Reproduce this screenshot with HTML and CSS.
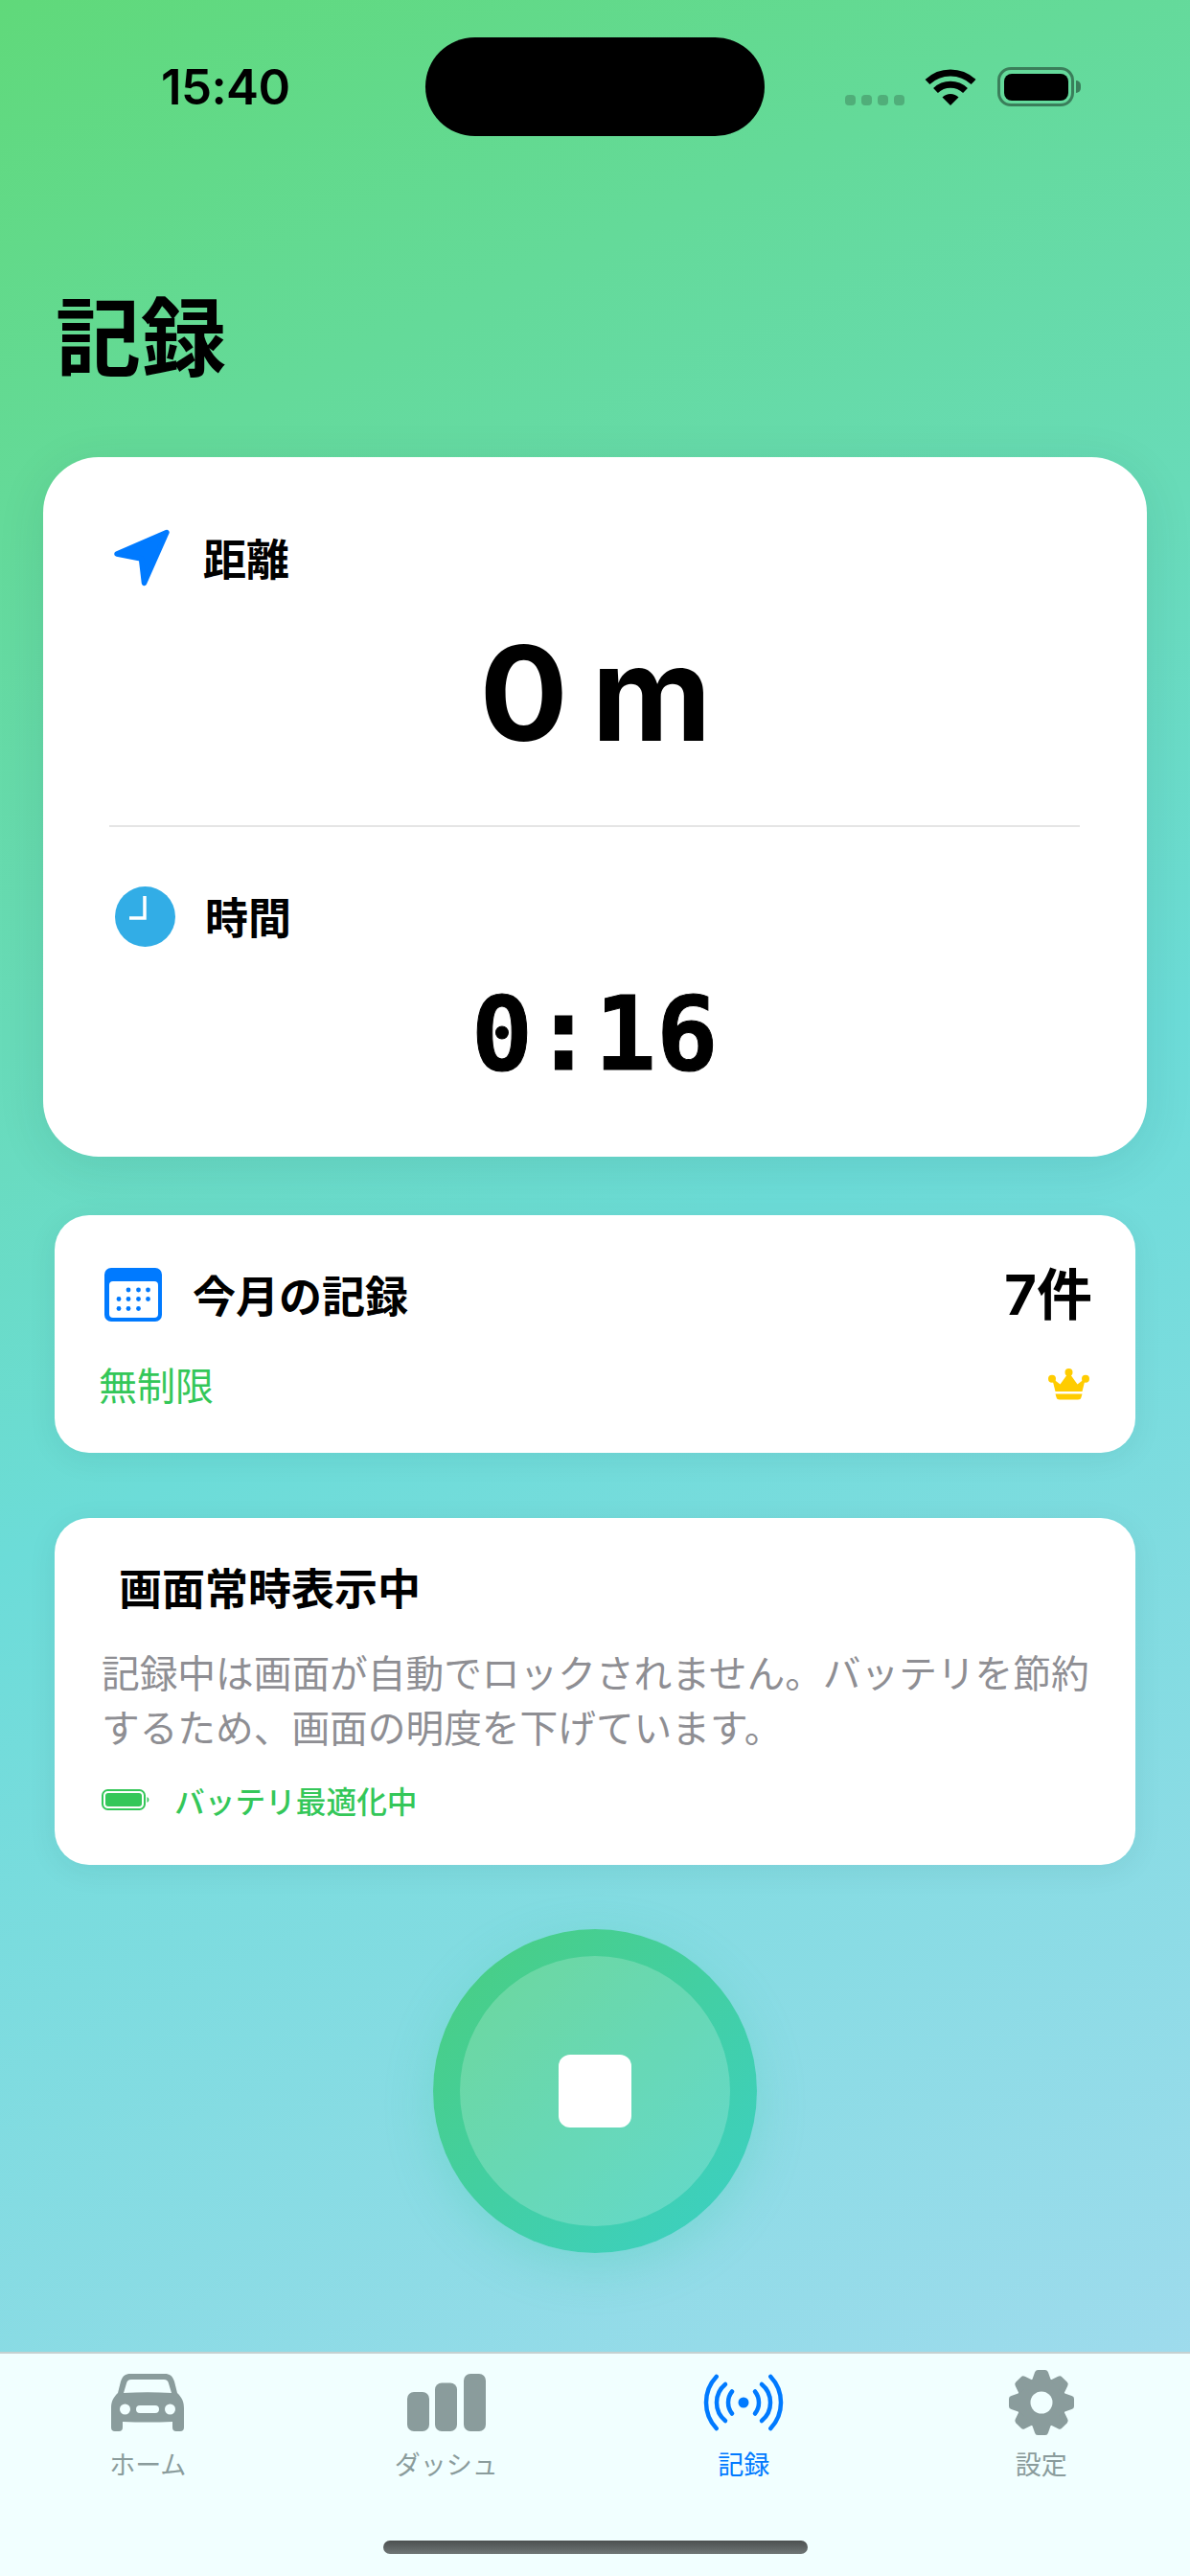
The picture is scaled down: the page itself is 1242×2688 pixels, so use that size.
FILE: index.html
```html
<!DOCTYPE html>
<html lang="ja">
<head>
<meta charset="utf-8">
<title>記録</title>
<link rel="stylesheet" href="styles.css">
</head>
<body>
<div class="screen">
  <div class="status">
    <div class="status-left"><span class="time">15:40</span></div>
    <div class="island"></div>
    <div class="status-right">
      <div class="dots"><i></i><i></i><i></i><i></i></div>
      <svg class="wifi" viewBox="0 0 54 39"><path d="M27 39L18.5 30.5A12 12 0 0 1 35.5 30.5Z" fill="#000"/><path d="M11.5 23.5A22.5 22.5 0 0 1 42.5 23.5" fill="none" stroke="#000" stroke-width="7"/><path d="M3 14.5A35 35 0 0 1 51 14.5" fill="none" stroke="#000" stroke-width="7"/></svg>
      <div class="battery"><div class="battery-fill"></div></div>
      <div class="battery-tip"></div>
    </div>
  </div>

  <main class="main">
    <h1 class="title">記録</h1>

    <section class="card-big">
      <div class="metric-head">
        <svg class="nav-icon" viewBox="0 0 60 60"><path d="M3 26L55 3.5L31.5 56.5L28.5 31Z" fill="#007AFF" stroke="#007AFF" stroke-width="5.5" stroke-linejoin="round"/></svg>
        <span class="metric-label">距離</span>
      </div>
      <div class="distance">0 m</div>
      <div class="divider"></div>
      <div class="metric-head metric-head-time">
        <svg class="clock-icon" viewBox="0 0 63 63"><circle cx="31.5" cy="31.5" r="31.5" fill="#32ADE6"/><path d="M31 10V33H15" fill="none" stroke="#fff" stroke-width="3.5"/></svg>
        <span class="metric-label">時間</span>
      </div>
      <div class="duration">0:16</div>
    </section>

    <section class="card card-month">
      <div class="month-row">
        <svg class="cal-icon" viewBox="0 0 60 56"><rect width="60" height="56" rx="7" fill="#007AFF"/><rect x="5" y="14" width="51" height="38" rx="4" fill="#fff"/><g fill="#007AFF"><circle cx="25" cy="23" r="2.4"/><circle cx="35.5" cy="23" r="2.4"/><circle cx="45.5" cy="23" r="2.4"/><circle cx="15" cy="32.5" r="2.4"/><circle cx="25" cy="32.5" r="2.4"/><circle cx="35.5" cy="32.5" r="2.4"/><circle cx="45.5" cy="32.5" r="2.4"/><circle cx="15" cy="42.5" r="2.4"/><circle cx="25" cy="42.5" r="2.4"/><circle cx="35.5" cy="42.5" r="2.4"/></g></svg>
        <span class="month-title">今月の記録</span>
        <span class="month-count">7件</span>
      </div>
      <div class="plan-row">
        <span class="plan">無制限</span>
        <svg class="crown" viewBox="0 0 43 33"><g fill="#FFCC00"><circle cx="4" cy="10.7" r="4"/><circle cx="21.5" cy="4" r="4"/><circle cx="39" cy="10.7" r="4"/><path d="M4 10L12.5 16.5L21.5 4L30.5 16.5L39 10L35.5 24H7.5Z"/><path d="M7.5 26.500H35.500L34.500 30Q34 32.500 31 32.500H12Q9 32.500 8.500 30Z"/></g></svg>
      </div>
    </section>

    <section class="card card-screen">
      <h2 class="screen-title">画面常時表示中</h2>
      <p class="screen-text">記録中は画面が自動でロックされません。バッテリを節約するため、画面の明度を下げています。</p>
      <div class="opt-row">
        <svg class="mini-battery" viewBox="0 0 50 22"><rect x="1" y="1" width="44" height="20" rx="5.500" fill="none" stroke="#34C759" stroke-width="2"/><rect x="4" y="4" width="38" height="14" rx="3" fill="#34C759"/><path d="M47.500 8Q49.500 9 49.500 11Q49.500 13 47.500 14Z" fill="#34C759"/></svg>
        <span class="opt-text">バッテリ最適化中</span>
      </div>
    </section>

    <div class="stop-wrap">
      <button class="stop" type="button"><span class="stop-inner"><span class="stop-square"></span></span></button>
    </div>
  </main>

  <nav class="tabbar">
    <div class="tabs">
      <div class="tab">
        <svg class="tab-icon car" viewBox="0 0 76 60"><path fill="#8A9C9C" fill-rule="evenodd" d="M20 0H56C61 0 64 2 66 8L69 20C74 25 76 29 76 36V56Q76 60 72 60H68Q64 60 64 56V50Q38 51 12 50V56Q12 60 8 60H4Q0 60 0 56V36C0 29 2 25 7 20L10 8C12 2 15 0 20 0ZM21 6C18 6 17 7 16 10L13 20Q38 18.500 63 20L60 10C59 7 58 6 55 6ZM9 37A5.500 5.500 0 1 0 20 37A5.500 5.500 0 1 0 9 37ZM56 37A5.500 5.500 0 1 0 67 37A5.500 5.500 0 1 0 56 37ZM30 33Q26 33 26 37Q26 41 30 41H46Q50 41 50 37Q50 33 46 33Z"/></svg>
        <span class="tab-label">ホーム</span>
      </div>
      <div class="tab">
        <svg class="tab-icon bars" viewBox="0 0 82 60"><g fill="#8A9C9C"><rect x="0" y="19" width="23" height="41" rx="7"/><rect x="29" y="9.500" width="23" height="50.500" rx="7"/><rect x="59" y="0" width="23" height="60" rx="7"/></g></svg>
        <span class="tab-label">ダッシュ</span>
      </div>
      <div class="tab tab-active">
        <svg class="tab-icon signal" viewBox="-42 -30 84 60"><circle r="5.500" fill="#007AFF"/><g fill="none" stroke="#007AFF" stroke-width="4.500" stroke-linecap="round"><path d="M-12 -11.500A18.500 18.500 0 0 0 -12 11.500"/><path d="M-19 -19A24.500 24.500 0 0 0 -19 19"/><path d="M-28.300 -27A39.400 39.400 0 0 0 -28.300 27"/><path d="M12 -11.500A18.500 18.500 0 0 1 12 11.500"/><path d="M19 -19A24.500 24.500 0 0 1 19 19"/><path d="M28.300 -27A39.400 39.400 0 0 1 28.300 27"/></g></svg>
        <span class="tab-label">記録</span>
      </div>
      <div class="tab">
        <svg class="tab-icon gear" viewBox="-34 -34 68 68"><defs><path id="tooth" d="M-10 -23L-7 -31.500Q-6.300 -34 -4 -34H4Q6.300 -34 7 -31.500L10 -23Z"/></defs><g fill="#8A9C9C"><circle r="26"/><use href="#tooth"/><use href="#tooth" transform="rotate(45)"/><use href="#tooth" transform="rotate(90)"/><use href="#tooth" transform="rotate(135)"/><use href="#tooth" transform="rotate(180)"/><use href="#tooth" transform="rotate(225)"/><use href="#tooth" transform="rotate(270)"/><use href="#tooth" transform="rotate(315)"/></g><circle r="11.500" fill="#F1FFFF"/></svg>
        <span class="tab-label">設定</span>
      </div>
    </div>
    <div class="home-indicator"></div>
  </nav>
</div>
</body>
</html>
```
FILE: styles.css
```css
* { box-sizing: border-box; }
html, body { margin: 0; padding: 0; }
body { font-family: "Noto Sans CJK JP", "Noto Sans", sans-serif; color: #000; }
.screen {
  width: 1242px;
  height: 2688px;
  display: flex;
  flex-direction: column;
  overflow: hidden;
  background: linear-gradient(155.2deg, #60d97a 0%, #6cdcd8 50%, #a6dbf0 100%);
}

/* status bar */
.status { display: flex; padding-top: 39px; height: 142px; flex: none; }
.status-left { width: 444px; padding-left: 168px; display: flex; align-items: center; }
.time { font-family: Inter, "Liberation Sans", sans-serif; font-weight: 600; font-size: 51px; line-height: 60px; letter-spacing: -0.6px; }
.island { width: 354px; height: 103px; border-radius: 52px; background: #000; }
.status-right { display: flex; position: relative; margin-left: 84px; height: 72px; margin-top: 31px; align-items: flex-start; }
.dots { display: flex; gap: 6px; margin-top: 29px; }
.dots i { display: block; width: 11px; height: 11px; border-radius: 4px; background: rgba(0, 0, 0, 0.2); }
.wifi { width: 54px; height: 39px; margin-left: 21px; margin-top: 1px; }
.battery { width: 80px; height: 41px; margin-left: 22px; border: 3.5px solid rgba(0, 0, 0, 0.42); border-radius: 14px; padding: 3.5px; }
.battery-fill { width: 100%; height: 100%; background: #000; border-radius: 8px; }
.battery-tip { width: 5px; height: 13px; margin: 14px 0 0 2px; background: rgba(0, 0, 0, 0.42); border-radius: 0 5px 5px 0; }

/* main */
.main { flex: 1; display: flex; flex-direction: column; }
.title { margin: 160px 0 0 58px; font-size: 89px; line-height: 89px; font-weight: 700; }

.card-big {
  margin: 86px 45px 0;
  height: 730px;
  padding: 75px 70px 0 69px;
  background: #fff;
  border-radius: 58px;
  box-shadow: 0 10px 50px rgba(0, 60, 60, 0.10);
}
.metric-head { display: flex; align-items: center; height: 60px; }
.nav-icon { width: 60px; height: 60px; margin-left: 5px; }
.metric-label { font-size: 45px; line-height: 60px; font-weight: 700; margin-left: 33px; }
.distance { font-family: Inter, Roboto, sans-serif; font-weight: 700; font-size: 137px; line-height: 150px; text-align: center; margin-top: 36px; letter-spacing: -2px; word-spacing: -4px; }
.divider { height: 2px; background: #e5e5e5; margin-top: 63px; }
.metric-head-time { margin-top: 61px; height: 64px; }
.clock-icon { width: 63px; height: 63px; margin-left: 6px; }
.metric-head-time .metric-label { margin-left: 31px; }
.duration { font-family: "DejaVu Sans Mono", "Liberation Mono", monospace; font-weight: 700; font-size: 107px; line-height: 120px; text-align: center; margin-top: 31px; -webkit-text-stroke: 1px #000; }

.card { margin: 0 57px; background: #fff; box-shadow: 0 6px 30px rgba(0, 60, 60, 0.08); }
.card-month { margin-top: 61px; height: 248px; border-radius: 36px; padding: 55px 45px 0 46px; }
.month-row { display: flex; align-items: center; height: 56px; }
.cal-icon { width: 60px; height: 56px; margin-left: 6px; }
.month-title { font-size: 45px; line-height: 56px; font-weight: 600; margin-left: 32px; }
.month-count { margin-left: auto; font-size: 58px; line-height: 54px; font-weight: 700; font-family: Inter, "Noto Sans CJK JP", sans-serif; }
.plan-row { display: flex; align-items: center; justify-content: space-between; margin-top: 40px; height: 50px; padding-right: 3px; }
.plan { font-size: 40px; line-height: 50px; color: #34C759; }
.crown { width: 43px; height: 33px; }

.card-screen { margin-top: 68px; height: 362px; border-radius: 36px; padding: 44px 36px 0 49px; }
.screen-title { margin: 0 0 0 18px; font-size: 45px; line-height: 56px; font-weight: 700; }
.screen-text { margin: 31px 0 0; font-size: 39.7px; line-height: 57px; color: #8E8E93; }
.opt-row { display: flex; align-items: center; height: 44px; margin-top: 27px; }
.mini-battery { width: 50px; height: 22px; }
.opt-text { margin-left: 26px; font-size: 31.7px; line-height: 44px; font-weight: 500; color: #34C759; }

.stop-wrap { display: flex; justify-content: center; margin-top: 67px; }
.stop {
  width: 338px;
  height: 338px;
  padding: 28px;
  border: none;
  border-radius: 50%;
  background: linear-gradient(135deg, #4ace7f, #3bd0c6);
  box-shadow: 0 14px 50px rgba(60, 200, 160, 0.28);
}
.stop-inner { display: flex; align-items: center; justify-content: center; width: 100%; height: 100%; border-radius: 50%; background: rgba(255, 255, 255, 0.2); }
.stop-square { width: 76px; height: 76px; border-radius: 12px; background: #fff; }

/* tab bar */
.tabbar { flex: none; height: 234px; background: #F1FFFF; border-top: 2px solid rgba(0, 0, 0, 0.18); }
.tabs { display: grid; grid-template-columns: repeat(4, 1fr); height: 195px; padding-top: 21px; }
.tab { display: flex; flex-direction: column; align-items: center; }
.tab:first-child { padding-right: 2px; }
.tab-icon { height: 60px; display: block; }
.car { width: 76px; }
.bars { width: 82px; }
.signal { width: 84px; }
.gear { width: 68px; height: 68px; margin-top: -4px; margin-bottom: -4px; }
.tab-label { font-size: 27px; line-height: 36px; margin-top: 16px; color: #8A9C9C; }
.tab-active .tab-label { color: #007AFF; }
.home-indicator { width: 443px; height: 14px; margin: 0 auto; border-radius: 7px; background: linear-gradient(#4c5050, #6f7676); }
```
